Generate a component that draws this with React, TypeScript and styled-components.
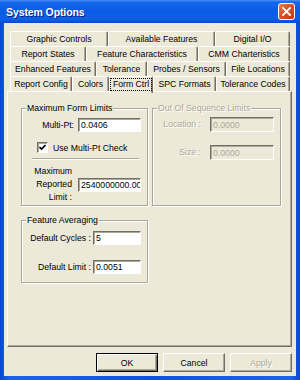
import styled, { createGlobalStyle } from "styled-components";

const GlobalStyle = createGlobalStyle`
  html, body {
    margin: 0;
    padding: 0;
    background: #ffffff;
  }
  body {
    font-family: "Liberation Sans", Arial, sans-serif;
    font-size: 8.7px;
  }
`;

const tabRows: { label: string; w: number; active?: boolean }[][] = [
  [
    { label: "Graphic Controls", w: 98 },
    { label: "Available Features", w: 107 },
    { label: "Digital I/O", w: 75 },
  ],
  [
    { label: "Report States", w: 76 },
    { label: "Feature Characteristics", w: 112 },
    { label: "CMM Charteristics", w: 92 },
  ],
  [
    { label: "Enhanced Features", w: 86 },
    { label: "Tolerance", w: 51 },
    { label: "Probes / Sensors", w: 79 },
    { label: "File Locations", w: 64 },
  ],
  [
    { label: "Report Config", w: 62 },
    { label: "Colors", w: 37 },
    { label: "Form Ctrl", w: 44, active: true },
    { label: "SPC Formats", w: 63 },
    { label: "Tolerance Codes", w: 74 },
  ],
];

const App = () => {
  return (
    <>
      <GlobalStyle />
      <Window>
        <TitleBar>
          <Title>System Options</Title>
          <CloseButton aria-label="Close">
            <svg width="9" height="9" viewBox="0 0 9 9">
              <path
                d="M1 1 L8 8 M8 1 L1 8"
                stroke="#ffffff"
                strokeWidth="1.8"
                strokeLinecap="square"
              />
            </svg>
          </CloseButton>
        </TitleBar>
        <Frame>
          <Body>
            <TabStrip>
              {tabRows.map((row, i) => (
                <TabRow key={i}>
                  {row.map((t) => (
                    <Tab key={t.label} $w={t.w} $active={t.active}>
                      {t.active ? <Focus>{t.label}</Focus> : t.label}
                    </Tab>
                  ))}
                </TabRow>
              ))}
            </TabStrip>
            <Panel>
              <Group $h={103}>
                <Legend>Maximum Form Limits</Legend>
                <FieldRow $label={52} $gap={4} $top={5}>
                  <Label>Multi-Pt:</Label>
                  <Input $w={63} defaultValue="0.0406" />
                </FieldRow>
                <CheckRow>
                  <CheckBox>
                    <svg width="7" height="7" viewBox="0 0 7 7">
                      <path
                        d="M0.5 3 L2.5 5 L6.5 1"
                        stroke="#000"
                        strokeWidth="1.6"
                        fill="none"
                      />
                    </svg>
                  </CheckBox>
                  Use Multi-Pt Check
                </CheckRow>
                <Separator />
                <FieldRow $label={50} $gap={6} $top={5}>
                  <Label $multi>
                    Maximum
                    <br />
                    Reported
                    <br />
                    Limit :
                  </Label>
                  <Input $w={63} defaultValue="2540000000.00" />
                </FieldRow>
              </Group>
              <Group $h={103} $disabled>
                <Legend $disabled>Out Of Sequence Limits</Legend>
                <FieldRow $label={48} $gap={9} $top={4}>
                  <Label $disabled>Location :</Label>
                  <Input $w={64} $h={15} disabled defaultValue="0.0000" />
                </FieldRow>
                <FieldRow $label={48} $gap={9} $top={13}>
                  <Label $disabled>Size :</Label>
                  <Input $w={64} $h={15} disabled defaultValue="0.0000" />
                </FieldRow>
              </Group>
              <Group $h={68}>
                <Legend>Feature Averaging</Legend>
                <FieldRow $label={69} $gap={2} $top={6}>
                  <Label>Default Cycles :</Label>
                  <Input $w={48} defaultValue="5" />
                </FieldRow>
                <FieldRow $label={69} $gap={2} $top={15}>
                  <Label>Default Limit :</Label>
                  <Input $w={48} defaultValue="0.0051" />
                </FieldRow>
              </Group>
            </Panel>
            <ButtonRow>
              <Button $default>OK</Button>
              <Button>Cancel</Button>
              <Button disabled>Apply</Button>
            </ButtonRow>
          </Body>
        </Frame>
      </Window>
    </>
  );
};
export default App;

const Window = styled.div`
  width: 300px;
  height: 380px;
  display: flex;
  flex-direction: column;
  background: #0b52e2;
  overflow: hidden;
`;

const TitleBar = styled.div`
  height: 23px;
  flex-shrink: 0;
  display: flex;
  align-items: center;
  justify-content: space-between;
  padding: 0 5px 0 6px;
  box-sizing: border-box;
  background: linear-gradient(
    to bottom,
    #4a92f6 0%,
    #1467ec 10%,
    #0a5be6 45%,
    #0d5ee9 85%,
    #0748cf 100%
  );
`;

const Title = styled.div`
  color: #ffffff;
  font-weight: bold;
  font-size: 10.5px;
  letter-spacing: -0.1px;
  text-shadow: 1px 1px 0 #0a1f8a;
`;

const CloseButton = styled.button`
  width: 17px;
  height: 17px;
  padding: 0;
  display: flex;
  align-items: center;
  justify-content: center;
  border: 1px solid #ffffff;
  border-radius: 3px;
  background: linear-gradient(135deg, #ec7b59 0%, #d9512b 45%, #c23a14 100%);
`;

const Frame = styled.div`
  flex: 1;
  display: flex;
  padding: 0 4px 4px 4px;
  background: linear-gradient(
    to right,
    #0a47d6 0%,
    #1a63ee 3%,
    #0b52e2 50%,
    #1a63ee 97%,
    #0a47d6 100%
  );
`;

const Body = styled.div`
  flex: 1;
  display: flex;
  flex-direction: column;
  background: #ece9d8;
  padding: 8px 4px 4px 3px;
`;

const TabStrip = styled.div`
  display: flex;
  flex-direction: column;
  margin-left: 3px;
`;

const TabRow = styled.div`
  display: flex;
  height: 15px;
  align-items: flex-start;
`;

const Tab = styled.div<{ $w: number; $active?: boolean }>`
  width: ${(p) => p.$w}px;
  height: ${(p) => (p.$active ? 17 : 15)}px;
  margin-bottom: ${(p) => (p.$active ? -2 : 0)}px;
  z-index: ${(p) => (p.$active ? 2 : 0)};
  box-sizing: border-box;
  display: flex;
  align-items: ${(p) => (p.$active ? "flex-start" : "center")};
  padding-top: ${(p) => (p.$active ? 1 : 0)}px;
  justify-content: center;
  border: 1px solid;
  border-bottom: none;
  border-color: #ffffff #716f64 transparent #ffffff;
  border-radius: 2px 2px 0 0;
  box-shadow: inset -1px 0 0 #aca899;
  background: #ece9d8;
  color: #000000;
  white-space: nowrap;
`;

const Focus = styled.span`
  border: 1px dotted #000000;
  padding: 0 2px;
  line-height: 11px;
`;

const Panel = styled.div`
  flex: 1;
  display: grid;
  grid-template-columns: 127px 129px;
  grid-template-rows: min-content min-content;
  column-gap: 4px;
  row-gap: 9px;
  align-content: start;
  padding: 11px 0 0 13px;
  border: 1px solid;
  border-color: #ffffff #716f64 #716f64 #ffffff;
  box-shadow: inset -1px -1px 0 #aca899;
`;

const Group = styled.fieldset<{ $h: number; $disabled?: boolean }>`
  margin: 0;
  padding: 0 0 0 0;
  min-width: 0;
  height: ${(p) => p.$h}px;
  box-sizing: border-box;
  display: flex;
  flex-direction: column;
  border: 1px solid #aca899;
  box-shadow: inset 1px 1px 0 #ffffff, 1px 1px 0 #ffffff;
`;

const Legend = styled.legend<{ $disabled?: boolean }>`
  margin-left: 4px;
  padding: 0 1px;
  line-height: 10px;
  background: #ece9d8;
  color: ${(p) => (p.$disabled ? "#aca899" : "#000000")};
  text-shadow: ${(p) => (p.$disabled ? "1px 1px 0 #ffffff" : "none")};
`;

const FieldRow = styled.div<{ $label: number; $gap: number; $top: number }>`
  display: grid;
  grid-template-columns: ${(p) => p.$label}px auto;
  column-gap: ${(p) => p.$gap}px;
  align-items: center;
  justify-content: start;
  margin-top: ${(p) => p.$top}px;
`;

const Label = styled.div<{ $disabled?: boolean; $multi?: boolean }>`
  text-align: right;
  line-height: ${(p) => (p.$multi ? 13 : 11)}px;
  color: ${(p) => (p.$disabled ? "#aca899" : "#000000")};
  text-shadow: ${(p) => (p.$disabled ? "1px 1px 0 #ffffff" : "none")};
  white-space: nowrap;
`;

const Input = styled.input<{ $w: number; $h?: number }>`
  width: ${(p) => p.$w}px;
  height: ${(p) => p.$h ?? 14}px;
  box-sizing: border-box;
  margin: 0;
  padding: 0 0 0 2px;
  font-family: "Liberation Sans", Arial, sans-serif;
  font-size: 8.7px;
  color: #000000;
  background: #ffffff;
  border: 1px solid;
  border-color: #716f64 #ffffff #ffffff #716f64;
  box-shadow: inset 1px 1px 0 #aca899;
  outline: none;

  &:disabled {
    background: #ece9d8;
    color: #aca899;
  }
`;

const CheckRow = styled.div`
  display: flex;
  align-items: center;
  gap: 5px;
  margin-top: 9px;
  padding-left: 15px;
  height: 13px;
`;

const CheckBox = styled.span`
  width: 11px;
  height: 11px;
  box-sizing: border-box;
  display: flex;
  align-items: center;
  justify-content: center;
  background: #ffffff;
  border: 1px solid;
  border-color: #716f64 #ffffff #ffffff #716f64;
  box-shadow: inset 1px 1px 0 #aca899;
`;

const Separator = styled.div`
  margin: 4px 8px 0 10px;
  border-top: 1px solid #aca899;
  border-bottom: 1px solid #ffffff;
`;

const ButtonRow = styled.div`
  display: flex;
  justify-content: flex-end;
  gap: 5px;
  margin-top: 6px;
`;

const Button = styled.button<{ $default?: boolean }>`
  width: 62px;
  height: 19px;
  box-sizing: border-box;
  margin: 0;
  padding: 0;
  font-family: "Liberation Sans", Arial, sans-serif;
  font-size: 8.7px;
  color: #000000;
  background: #ece9d8;
  border: 1px solid;
  border-color: ${(p) =>
    p.$default ? "#000000" : "#ffffff #716f64 #716f64 #ffffff"};
  box-shadow: ${(p) =>
    p.$default
      ? "inset 1px 1px 0 #ffffff, inset -1px -1px 0 #716f64, inset -2px -2px 0 #aca899"
      : "inset -1px -1px 0 #aca899"};

  &:disabled {
    color: #aca899;
    text-shadow: 1px 1px 0 #ffffff;
  }
`;
